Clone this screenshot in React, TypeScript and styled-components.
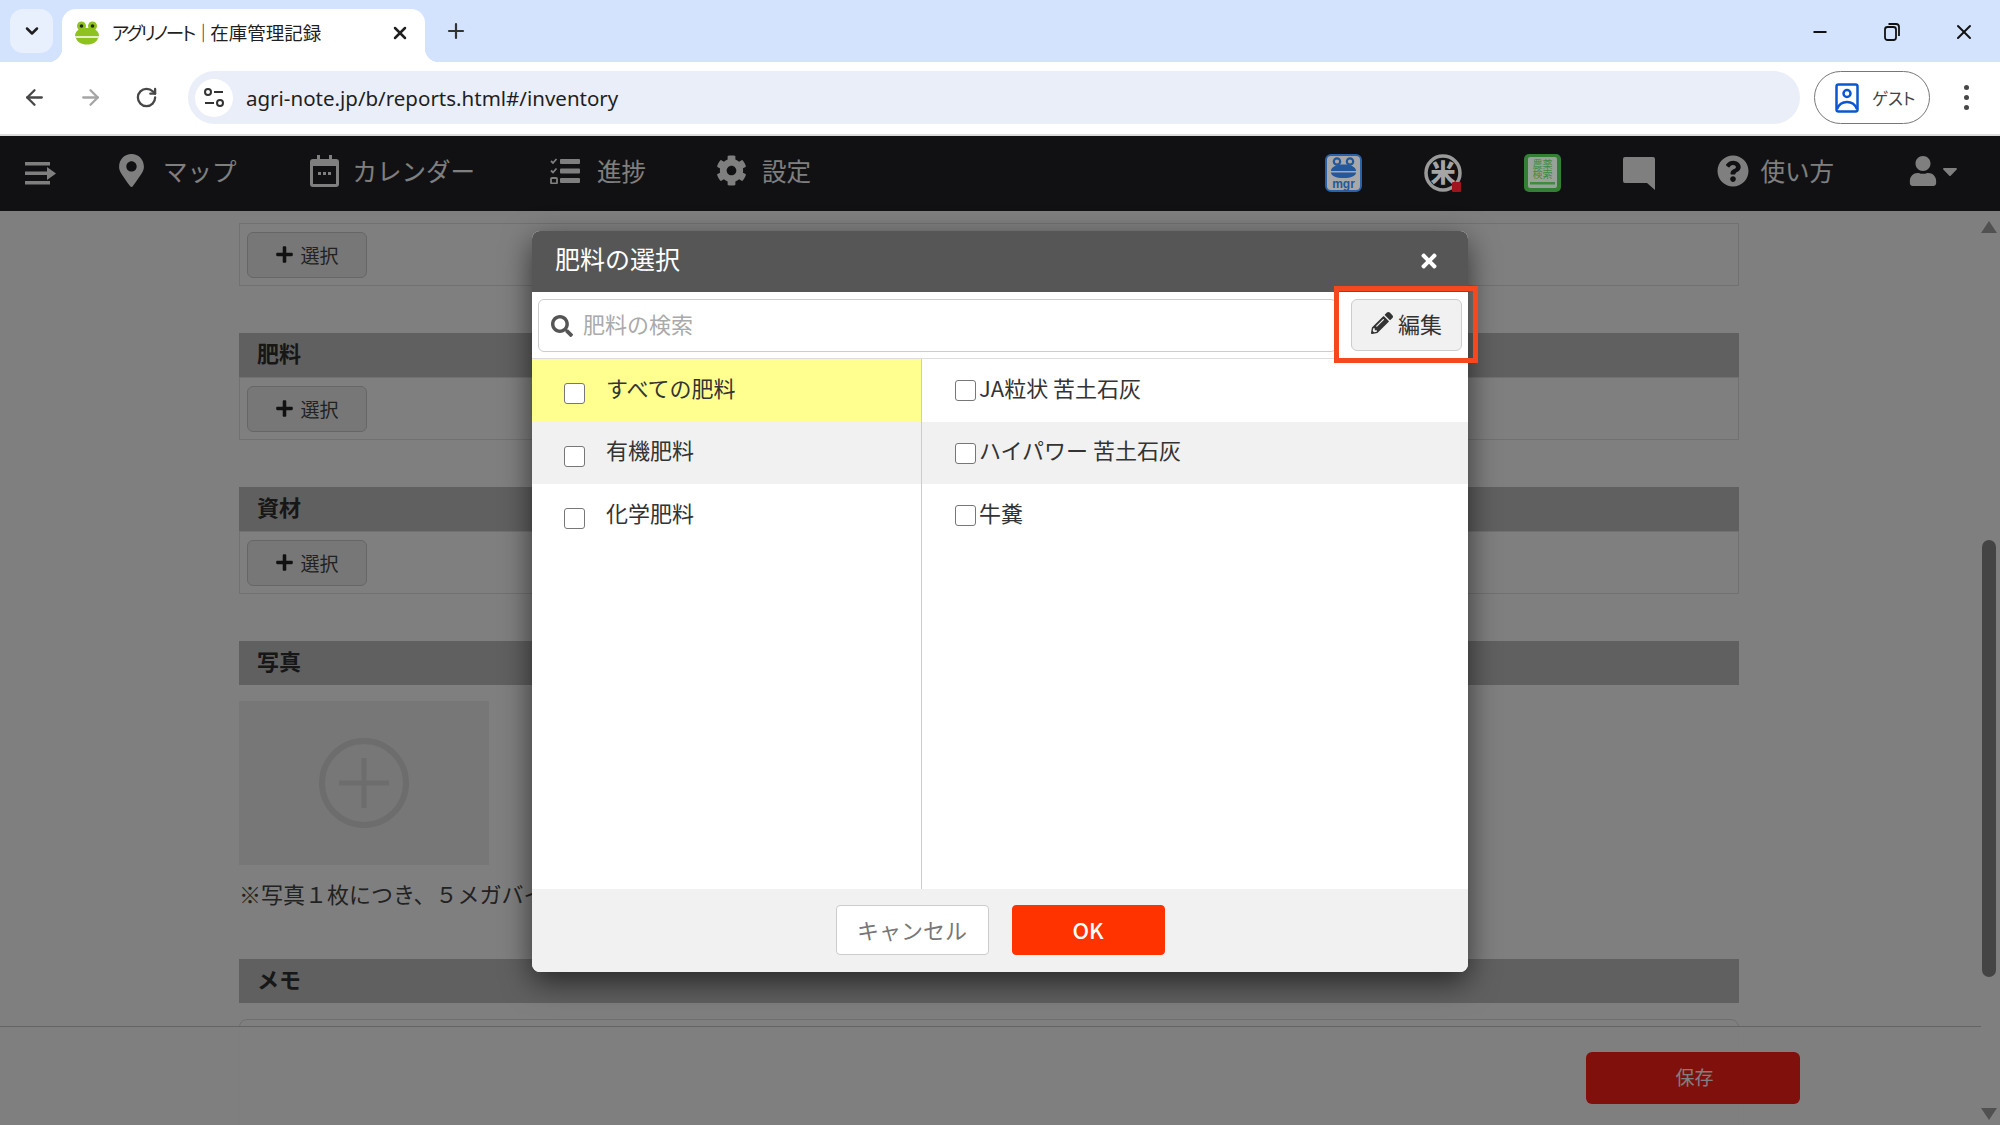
import styled, { createGlobalStyle } from "styled-components";
import { ArrowLeft, ArrowRight, ChevronDown, Minus, Plus, RotateCw, X } from "lucide-react";
import {
  FaCaretDown,
  FaCog,
  FaMapMarkerAlt,
  FaPencilAlt,
  FaPlus,
  FaQuestionCircle,
  FaSearch,
  FaTimes,
  FaUser,
} from "react-icons/fa";

const JP = `"Noto Sans CJK JP", "Noto Sans", sans-serif`;

const GlobalStyle = createGlobalStyle`
  html, body {
    margin: 0;
    padding: 0;
    background: #fff;
    overflow: hidden;
  }
  * {
    box-sizing: border-box;
  }
`;

const Screen = styled.div`
  position: relative;
  width: 2000px;
  height: 1125px;
  display: flex;
  flex-direction: column;
  overflow: hidden;
  font-family: ${JP};
  color: #333;
`;

/* browser chrome */

const TabStrip = styled.div`
  height: 62px;
  flex: none;
  display: flex;
  align-items: flex-start;
  padding: 9px 0 0 10px;
  background: #d3e3fd;
  color: #1f1f1f;
`;

const TabSearch = styled.div`
  width: 43px;
  height: 44px;
  display: flex;
  align-items: center;
  justify-content: center;
  border-radius: 13px;
  background: #e8f0fe;
`;

const Tab = styled.div`
  position: relative;
  width: 363px;
  height: 53px;
  margin-left: 9px;
  padding: 0 15px 6px 12px;
  display: flex;
  align-items: center;
  background: #fff;
  border-radius: 14px 14px 0 0;

  &::before,
  &::after {
    content: "";
    position: absolute;
    bottom: 0;
    width: 14px;
    height: 14px;
  }
  &::before {
    left: -14px;
    background: radial-gradient(circle at 0 0, transparent 14px, #fff 14.5px);
  }
  &::after {
    right: -14px;
    background: radial-gradient(circle at 100% 0, transparent 14px, #fff 14.5px);
  }
`;

const TabTitle = styled.span`
  flex: 1;
  margin-left: 12px;
  padding-bottom: 2px;
  font-size: 18.5px;
  font-feature-settings: "palt";
  white-space: nowrap;
`;

const TabBrand = styled.span`
  letter-spacing: -2.2px;
`;

const NewTab = styled.div`
  width: 40px;
  height: 44px;
  margin-left: 11px;
  display: flex;
  align-items: center;
  justify-content: center;
`;

const WindowControls = styled.div`
  margin-left: auto;
  margin-top: 1px;
  display: flex;
`;

const WindowButton = styled.div`
  width: 72px;
  height: 44px;
  display: flex;
  align-items: center;
  justify-content: center;
`;

const Toolbar = styled.div`
  height: 74px;
  flex: none;
  display: flex;
  align-items: center;
  padding: 0 12px 1px 6px;
  background: #fff;
  border-radius: 12px 12px 0 0;
  border-bottom: 2px solid #dcdcdc;
  color: #444;
`;

const ToolButton = styled.div<{ $muted?: boolean }>`
  width: 56px;
  height: 44px;
  display: flex;
  align-items: center;
  justify-content: center;
  color: ${({ $muted }) => ($muted ? "#a5a5a5" : "#474747")};
`;

const AddressBar = styled.div`
  flex: 1;
  height: 53px;
  margin-left: 14px;
  padding-left: 7px;
  display: flex;
  align-items: center;
  border-radius: 27px;
  background: #e9eef8;
`;

const SiteBadge = styled.div`
  width: 38px;
  height: 38px;
  display: flex;
  align-items: center;
  justify-content: center;
  border-radius: 50%;
  background: #fff;
`;

const Url = styled.span`
  margin-left: 13px;
  font-family: "Noto Sans", sans-serif;
  font-size: 20.5px;
  color: #1f1f1f;
`;

const GuestChip = styled.div`
  width: 116px;
  height: 53px;
  margin-left: 14px;
  padding-left: 20px;
  display: flex;
  align-items: center;
  gap: 13px;
  border: 1.5px solid #777;
  border-radius: 27px;
  font-size: 16.5px;
  font-feature-settings: "palt";
  color: #444;
`;

const MenuButton = styled.div`
  width: 44px;
  margin-left: 14px;
  display: flex;
  flex-direction: column;
  align-items: center;
  gap: 5px;
`;

const Dot = styled.span`
  width: 5px;
  height: 5px;
  border-radius: 50%;
  background: #474747;
`;

/* app nav */

const AppNav = styled.div`
  height: 75px;
  flex: none;
  display: flex;
  align-items: center;
  padding: 0 38px 0 25px;
  background: #222327;
  color: #fff;
  font-size: 24.5px;
`;

const NavItem = styled.div<{ $gap: number; $shift?: number }>`
  display: flex;
  align-items: center;
  gap: ${({ $gap }) => $gap}px;
  margin-left: ${({ $shift }) => $shift || 0}px;
  white-space: nowrap;
  padding-bottom: 6px;
`;

const NavLeft = styled.div`
  display: flex;
  align-items: center;
  gap: 72px;
  margin-left: 59px;
`;

const NavRight = styled.div`
  margin-left: auto;
  display: flex;
  align-items: center;
  gap: 62px;
`;

/* these three logos stay brighter than the dimmed bar around them */
const LogoSlot = styled.div`
  position: relative;
  z-index: 2;
  display: flex;
  margin-bottom: 2px;
`;

/* page under the dialog */

const Page = styled.div`
  flex: 1;
  padding: 12px 261px 0 239px;
  background: #fff;
  overflow: hidden;
  font-size: 22px;
`;

const Section = styled.section`
  margin-bottom: 47px;
`;

const SectionBar = styled.div`
  height: 44px;
  padding: 0 0 6px 18px;
  display: flex;
  align-items: center;
  background: #c0c0c0;
  font-weight: 700;
  color: #2e2e2e;
`;

const SectionBox = styled.div`
  height: 63px;
  padding: 8px 7px;
  border: 1px solid #e2e2e2;
`;

const SelectButton = styled.div`
  width: 120px;
  height: 46px;
  padding-bottom: 2px;
  display: flex;
  align-items: center;
  justify-content: center;
  gap: 6px;
  border: 1px solid #ccc;
  border-radius: 6px;
  background: #eee;
  font-size: 19px;
  color: #444;
`;

const PhotoBox = styled.div`
  width: 250px;
  height: 164px;
  margin-top: 16px;
  display: flex;
  align-items: center;
  justify-content: center;
  background: #eee;
`;

const Note = styled.p`
  margin: 12px 0 0;
  line-height: 32px;
  color: #444;
  white-space: nowrap;
`;

const MemoSection = styled.section`
  margin-top: 50px;
`;

const MemoInput = styled.div`
  height: 200px;
  margin-top: 16px;
  border: 1px solid #ddd;
  border-radius: 8px;
`;

const SaveBar = styled.div`
  position: absolute;
  left: 0;
  right: 0;
  bottom: 0;
  height: 99px;
  padding: 25px 200px 0 0;
  display: flex;
  justify-content: flex-end;
  align-items: flex-start;
  border-top: 1px solid #c8c8c8;
  background: rgba(255, 255, 255, 0.92);
`;

const SaveButton = styled.div`
  width: 214px;
  height: 52px;
  padding: 0 0 4px 3px;
  display: flex;
  align-items: center;
  justify-content: center;
  border-radius: 6px;
  background: #ff2016;
  color: #fff;
  font-size: 19px;
`;

const ScrollTrack = styled.div`
  position: absolute;
  top: 211px;
  right: 0;
  bottom: 0;
  width: 19px;
  background: #fff;
`;

const ScrollThumb = styled.div`
  position: absolute;
  top: 329px;
  left: 1px;
  width: 14px;
  height: 437px;
  border-radius: 7px;
  background: #888;
`;

const ScrollArrow = styled.div<{ $down?: boolean }>`
  position: absolute;
  left: 0;
  ${({ $down }) => ($down ? "bottom: 5px;" : "top: 10px;")}
  width: 0;
  height: 0;
  border-left: 8px solid transparent;
  border-right: 8px solid transparent;
  ${({ $down }) => ($down ? "border-top: 12px solid #a3a3a3;" : "border-bottom: 12px solid #a3a3a3;")}
`;

/* dialog */

const Backdrop = styled.div`
  position: absolute;
  top: 136px;
  left: 0;
  right: 0;
  bottom: 0;
  padding: 95px 0 0;
  display: flex;
  justify-content: center;
  align-items: flex-start;
  background: rgba(0, 0, 0, 0.5);
`;

const Modal = styled.div`
  position: relative;
  width: 936px;
  height: 741px;
  display: flex;
  flex-direction: column;
  border-radius: 8px;
  background: #fff;
  box-shadow: 0 10px 30px rgba(0, 0, 0, 0.6);
`;

const ModalHeader = styled.div`
  height: 61px;
  flex: none;
  padding: 0 28px 7px 23px;
  display: flex;
  align-items: center;
  justify-content: space-between;
  border-radius: 8px 8px 0 0;
  background: #565656;
  color: #fff;
  font-size: 25px;
`;

const CloseIcon = styled(FaTimes)`
  margin-top: 6px;
`;

const SearchRow = styled.div`
  height: 67px;
  flex: none;
  padding: 7px 6px 0;
  display: flex;
  align-items: flex-start;
  gap: 14px;
  border-bottom: 1px solid #ddd;
`;

const SearchField = styled.label`
  flex: 1;
  height: 53px;
  padding-left: 12px;
  display: flex;
  align-items: center;
  gap: 10px;
  border: 1px solid #ccc;
  border-radius: 6px;
  color: #555;
`;

const SearchInput = styled.input`
  flex: 1;
  min-width: 0;
  padding: 0 0 6px;
  border: 0;
  outline: 0;
  background: transparent;
  font-family: ${JP};
  font-size: 22px;

  &::placeholder {
    color: #aaa;
    opacity: 1;
  }
`;

const EditButton = styled.div`
  width: 111px;
  height: 52px;
  padding-bottom: 4px;
  display: flex;
  align-items: center;
  justify-content: center;
  gap: 5px;
  border: 1px solid #ccc;
  border-radius: 6px;
  background: #f1f1f1;
  font-size: 22px;
  color: #333;
`;

const Highlight = styled.div`
  position: absolute;
  left: 802px;
  top: 55px;
  width: 144px;
  height: 77px;
  border: 5px solid #f5481f;
`;

const Lists = styled.div`
  flex: 1;
  display: grid;
  grid-template-columns: 389px 1fr;
  min-height: 0;
`;

const ListColumn = styled.div<{ $divided?: boolean }>`
  ${({ $divided }) => ($divided ? "border-left: 1px solid #ccc;" : "")}
`;

const ListRow = styled.div<{ $bg?: string; $inset: number; $gap: number }>`
  height: 62.5px;
  padding: 0 0 7px ${({ $inset }) => $inset}px;
  display: flex;
  align-items: center;
  gap: ${({ $gap }) => $gap}px;
  background: ${({ $bg }) => $bg || "#fff"};
  font-size: 22px;
  color: #333;
`;

const Check = styled.input.attrs({ type: "checkbox" })<{ $drop: number }>`
  appearance: none;
  width: 21px;
  height: 21px;
  margin: ${({ $drop }) => $drop}px 0 0;
  flex: none;
  border: 1.5px solid #777;
  border-radius: 3px;
  background: #fff;
`;

const ModalFooter = styled.div`
  height: 83px;
  flex: none;
  padding-top: 16px;
  display: flex;
  justify-content: center;
  align-items: flex-start;
  gap: 23px;
  border-radius: 0 0 8px 8px;
  background: #f1f1f1;
`;

const FooterButton = styled.div<{ $primary?: boolean }>`
  width: 153px;
  height: 50px;
  padding-bottom: 2px;
  display: flex;
  align-items: center;
  justify-content: center;
  border: 1px solid ${({ $primary }) => ($primary ? "#ff3300" : "#ccc")};
  border-radius: 4px;
  background: ${({ $primary }) => ($primary ? "#ff3300" : "#fff")};
  color: ${({ $primary }) => ($primary ? "#fff" : "#777")};
  font-size: 22px;
  font-weight: ${({ $primary }) => ($primary ? 500 : 400)};
`;

/* drawn icons */

const FrogFavicon = () => (
  <svg width="26" height="24" viewBox="0 0 26 24">
    <circle cx="7.5" cy="5" r="4.5" fill="#8dc21f" />
    <circle cx="18.5" cy="5" r="4.5" fill="#8dc21f" />
    <circle cx="7.5" cy="5" r="1.8" fill="#1f2a10" />
    <circle cx="18.5" cy="5" r="1.8" fill="#1f2a10" />
    <path d="M1 15C1 9.5 6 7 13 7s12 2.500 12 8z" fill="#8dc21f" />
    <rect x="1" y="15" width="24" height="2" fill="#e4efc8" />
    <path d="M2 17h22c-1 4-5 6.500-11 6.500S3 21 2 17z" fill="#8dc21f" />
  </svg>
);

const TuneIcon = () => (
  <svg width="22" height="22" viewBox="0 0 22 22" fill="none" stroke="#333" strokeWidth="2">
    <circle cx="5" cy="5" r="3" />
    <path d="M11 5h9M2 16h9" />
    <circle cx="17" cy="16" r="3" />
  </svg>
);

const RestoreIcon = () => (
  <svg width="16" height="18" viewBox="0 0 16 18" fill="none" stroke="#111" strokeWidth="1.800">
    <rect x="1" y="4" width="11" height="13" rx="2.500" />
    <path d="M4.500 1H12a3 3 0 0 1 3 3v9" />
  </svg>
);

const GuestIcon = () => (
  <svg width="24" height="30" viewBox="0 0 24 30" fill="none" stroke="#0b57d0" strokeWidth="2.500">
    <rect x="1.500" y="1.500" width="21" height="27" rx="2" />
    <circle cx="12" cy="10.500" r="3.500" />
    <path d="M2 26c2-5 5-7 10-7s8 2 10 7" />
  </svg>
);

const MenuArrowIcon = () => (
  <svg width="31" height="23" viewBox="0 0 31 23" fill="#fff">
    <rect x="0" y="0" width="25" height="3.500" />
    <rect x="0" y="9.500" width="24" height="3.500" />
    <rect x="0" y="19" width="25" height="3.500" />
    <path d="M22 5l9 6.500-9 6.500z" />
  </svg>
);

const CalendarIcon = () => (
  <svg width="29" height="32" viewBox="0 0 29 32" fill="#fff">
    <path d="M7 0h3v4h9V0h3v4h4a3 3 0 0 1 3 3v22a3 3 0 0 1-3 3H3a3 3 0 0 1-3-3V7a3 3 0 0 1 3-3h4zM3 11v18h23V11z" fillRule="evenodd" />
    <rect x="8" y="17" width="3" height="3" />
    <rect x="13" y="17" width="3" height="3" />
    <rect x="18" y="17" width="3" height="3" />
  </svg>
);

const TasksIcon = () => (
  <svg width="30" height="26" viewBox="0 0 30 26">
    <g fill="#fff">
      <rect x="10" y="1" width="20" height="5" rx="1" />
      <rect x="10" y="10.500" width="20" height="5" rx="1" />
      <rect x="10" y="20" width="20" height="5" rx="1" />
    </g>
    <g fill="none" stroke="#fff" strokeWidth="1.800">
      <path d="M1 3l2 2 3.500-4M1 12.500l2 2 3.500-4" />
      <rect x="1" y="20" width="6" height="5.500" rx="1" />
    </g>
  </svg>
);

const ChatIcon = () => (
  <svg width="32" height="33" viewBox="0 0 32 33" fill="#fff">
    <path d="M2 0h28a2 2 0 0 1 2 2v31l-8-7H2a2 2 0 0 1-2-2V2a2 2 0 0 1 2-2z" />
  </svg>
);

const MgrLogo = () => (
  <svg width="37" height="38" viewBox="0 0 37 38">
    <rect x="1" y="1" width="35" height="36" rx="5" fill="#a8a8a8" stroke="#2a62a8" strokeWidth="2" />
    <circle cx="12" cy="7.500" r="3.200" fill="#a8a8a8" stroke="#23589c" strokeWidth="2.200" />
    <circle cx="25" cy="7.500" r="3.200" fill="#a8a8a8" stroke="#23589c" strokeWidth="2.200" />
    <path d="M6 17c0-4 5-6.500 12.500-6.500S31 13 31 17z" fill="#23589c" />
    <path d="M6 18.500h25c0 3.500-5 5.500-12.500 5.500S6 22 6 18.500z" fill="#23589c" />
    <text x="18.500" y="34" textAnchor="middle" fontFamily="Liberation Sans" fontSize="12" fontWeight="700" fill="#23589c">
      mgr
    </text>
  </svg>
);

const RiceLogo = () => (
  <svg width="38" height="38" viewBox="0 0 38 38">
    <circle cx="19" cy="19" r="17" fill="#101113" stroke="#9a9a9a" strokeWidth="3.500" />
    <text x="19" y="28" textAnchor="middle" fontFamily="Noto Sans CJK JP" fontSize="25" fontWeight="900" fill="#a5a5a5">
      米
    </text>
    <rect x="28" y="28" width="9" height="10" rx="1" fill="#a0141e" />
  </svg>
);

const BookLogo = () => (
  <svg width="37" height="38" viewBox="0 0 37 38">
    <rect width="37" height="38" rx="5" fill="#337f35" />
    <rect x="4" y="3" width="29" height="31" rx="2" fill="#99a299" />
    <text x="18.500" y="14" textAnchor="middle" fontFamily="Noto Sans CJK JP" fontSize="10" fill="#3f8c41">
      農薬
    </text>
    <text x="18.500" y="24" textAnchor="middle" fontFamily="Noto Sans CJK JP" fontSize="10" fill="#3f8c41">
      検索
    </text>
    <rect x="6" y="28" width="25" height="2.500" fill="#3f8c41" />
  </svg>
);

const PhotoPlusIcon = () => (
  <svg width="90" height="90" viewBox="0 0 90 90" fill="none" stroke="#dadada">
    <circle cx="45" cy="45" r="42" strokeWidth="6" />
    <path d="M45 20v50M20 45h50" strokeWidth="5" />
  </svg>
);

const SelectBlock = () => (
  <SectionBox>
    <SelectButton>
      <FaPlus size={19} color="#222" />
      選択
    </SelectButton>
  </SectionBox>
);

const categories = ["すべての肥料", "有機肥料", "化学肥料"];
const fertilizers = ["JA粒状 苦土石灰", "ハイパワー 苦土石灰", "牛糞"];

const rowColor = (index: number, selected: boolean) => {
  if (selected) return "#ffff90";
  return index === 1 ? "#f1f1f1" : "#fff";
};

const App: React.FC = () => {
  return (
    <Screen>
      <GlobalStyle />
      <TabStrip>
        <TabSearch>
          <ChevronDown size={20} strokeWidth={3} />
        </TabSearch>
        <Tab>
          <FrogFavicon />
          <TabTitle>
            <TabBrand>アグリノート｜</TabBrand>在庫管理記録
          </TabTitle>
          <X size={20} strokeWidth={3} />
        </Tab>
        <NewTab>
          <Plus size={24} strokeWidth={2.2} color="#333" />
        </NewTab>
        <WindowControls>
          <WindowButton>
            <Minus size={20} strokeWidth={2.2} color="#111" />
          </WindowButton>
          <WindowButton>
            <RestoreIcon />
          </WindowButton>
          <WindowButton>
            <X size={24} strokeWidth={2} color="#111" />
          </WindowButton>
        </WindowControls>
      </TabStrip>

      <Toolbar>
        <ToolButton>
          <ArrowLeft size={25} strokeWidth={2.2} />
        </ToolButton>
        <ToolButton $muted>
          <ArrowRight size={25} strokeWidth={2.2} />
        </ToolButton>
        <ToolButton>
          <RotateCw size={23} strokeWidth={2.4} />
        </ToolButton>
        <AddressBar>
          <SiteBadge>
            <TuneIcon />
          </SiteBadge>
          <Url>agri-note.jp/b/reports.html#/inventory</Url>
        </AddressBar>
        <GuestChip>
          <GuestIcon />
          ゲスト
        </GuestChip>
        <MenuButton>
          <Dot />
          <Dot />
          <Dot />
        </MenuButton>
      </Toolbar>

      <AppNav>
        <MenuArrowIcon />
        <NavLeft>
          <NavItem $gap={15}>
            <FaMapMarkerAlt size={33} />
            マップ
          </NavItem>
          <NavItem $gap={14} $shift={1}>
            <CalendarIcon />
            カレンダー
          </NavItem>
          <NavItem $gap={17} $shift={3}>
            <TasksIcon />
            進捗
          </NavItem>
          <NavItem $gap={15} $shift={-2}>
            <FaCog size={31} />
            設定
          </NavItem>
        </NavLeft>
        <NavRight>
          <LogoSlot>
            <MgrLogo />
          </LogoSlot>
          <LogoSlot>
            <RiceLogo />
          </LogoSlot>
          <LogoSlot>
            <BookLogo />
          </LogoSlot>
          <ChatIcon />
          <NavItem $gap={12}>
            <FaQuestionCircle size={32} />
            使い方
          </NavItem>
          <NavItem $gap={0} $shift={12}>
            <FaUser size={30} />
            <FaCaretDown size={24} />
          </NavItem>
        </NavRight>
      </AppNav>

      <Page>
        <Section>
          <SelectBlock />
        </Section>
        <Section>
          <SectionBar>肥料</SectionBar>
          <SelectBlock />
        </Section>
        <Section>
          <SectionBar>資材</SectionBar>
          <SelectBlock />
        </Section>
        <section>
          <SectionBar>写真</SectionBar>
          <PhotoBox>
            <PhotoPlusIcon />
          </PhotoBox>
          <Note>※写真１枚につき、５メガバイトまで登録できます。</Note>
        </section>
        <MemoSection>
          <SectionBar>メモ</SectionBar>
          <MemoInput />
        </MemoSection>
      </Page>

      <SaveBar>
        <SaveButton>保存</SaveButton>
      </SaveBar>
      <ScrollTrack>
        <ScrollArrow />
        <ScrollThumb />
        <ScrollArrow $down />
      </ScrollTrack>

      <Backdrop>
        <Modal>
          <ModalHeader>
            肥料の選択
            <CloseIcon size={22} />
          </ModalHeader>
          <SearchRow>
            <SearchField>
              <FaSearch size={22} />
              <SearchInput placeholder="肥料の検索" />
            </SearchField>
            <EditButton>
              <FaPencilAlt size={22} />
              編集
            </EditButton>
          </SearchRow>
          <Lists>
            <ListColumn>
              {categories.map((name, i) => (
                <ListRow key={name} $bg={rowColor(i, i === 0)} $inset={32} $gap={21}>
                  <Check $drop={14} />
                  {name}
                </ListRow>
              ))}
            </ListColumn>
            <ListColumn $divided>
              {fertilizers.map((name, i) => (
                <ListRow key={name} $bg={rowColor(i, false)} $inset={33} $gap={3}>
                  <Check $drop={8} />
                  {name}
                </ListRow>
              ))}
            </ListColumn>
          </Lists>
          <ModalFooter>
            <FooterButton>キャンセル</FooterButton>
            <FooterButton $primary>OK</FooterButton>
          </ModalFooter>
          <Highlight />
        </Modal>
      </Backdrop>
    </Screen>
  );
};

export default App;
